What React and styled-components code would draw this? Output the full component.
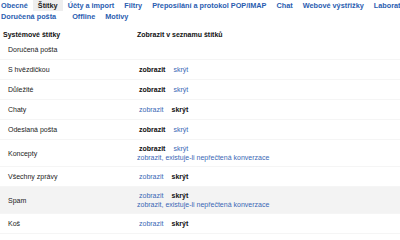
import styled, { createGlobalStyle } from "styled-components";

const GlobalStyle = createGlobalStyle`
	body {
		margin: 0;
		background: #fff;
		font-family: "Liberation Sans", Arial, sans-serif;
		overflow: hidden;
	}
`;

const Page = styled.div`
	width: 400px;
	height: 234px;
	overflow: hidden;
`;

const TabRow = styled.div`
	display: flex;
	margin-left: -4px;
	height: ${(p) => p.h}px;
	white-space: nowrap;
	align-items: center;
`;

const Tab = styled.span`
	padding: 0 5px;
	height: 11px;
	line-height: 11px;
	font-size: 7.3px;
	font-weight: bold;
	color: ${(p) => (p.active ? "#222" : "#2a5db0")};
	background: ${(p) => (p.active ? "#eeeeee" : "transparent")};
	margin-right: ${(p) => p.extra || 0}px;
`;

const Table = styled.div`
	margin-top: 1px;
	font-size: 7px;
	line-height: 9px;
	color: #222;
`;

const Row = styled.div`
	display: grid;
	grid-template-columns: 137px 1fr;
	align-items: center;
	min-height: 20px;
	box-sizing: border-box;
	padding: 4px 0;
	border-bottom: 1px solid #f5f5f5;
	background: ${(p) => (p.hover ? "#f3f3f3" : "transparent")};
`;

const HeadRow = styled(Row)`
	min-height: 0;
	padding: 8px 0 1px;
	border-bottom: none;
	font-weight: bold;
	color: #111;
`;

const Name = styled.div`
	padding-left: ${(p) => (p.head ? 3 : 8)}px;
`;

const Actions = styled.div`
	padding-left: ${(p) => (p.head ? 0 : 2)}px;
`;

const Choice = styled.span`
	margin-right: 8px;
	font-weight: ${(p) => (p.on ? "bold" : "normal")};
	color: ${(p) => (p.on ? "#111" : "#3a67b5")};
`;

const Extra = styled.div`
	margin-left: -2px;
	color: #3a67b5;
`;

const labels = [
	{ name: "S hvězdičkou", shown: true },
	{ name: "Důležité", shown: true },
	{ name: "Chaty", shown: false },
	{ name: "Odeslaná pošta", shown: true },
	{ name: "Koncepty", shown: true, extra: true },
	{ name: "Všechny zprávy", shown: false },
	{ name: "Spam", shown: false, extra: true, hover: true },
	{ name: "Koš", shown: false },
];

export default function App() {
	return (
		<Page>
			<GlobalStyle />
			<TabRow h={11}>
				<Tab>Obecné</Tab>
				<Tab active>Štítky</Tab>
				<Tab>Účty a import</Tab>
				<Tab>Filtry</Tab>
				<Tab>Přeposílání a protokol POP/IMAP</Tab>
				<Tab>Chat</Tab>
				<Tab>Webové výstřižky</Tab>
				<Tab>Laboratoř</Tab>
			</TabRow>
			<TabRow h={10}>
				<Tab extra={6}>Doručená pošta</Tab>
				<Tab>Offline</Tab>
				<Tab>Motivy</Tab>
			</TabRow>
			<Table>
				<HeadRow>
					<Name head>Systémové štítky</Name>
					<Actions head>Zobrazit v seznamu štítků</Actions>
				</HeadRow>
				<Row>
					<Name>Doručená pošta</Name>
					<Actions />
				</Row>
				{labels.map((l) => (
					<Row key={l.name} hover={l.hover}>
						<Name>{l.name}</Name>
						<Actions>
							<Choice on={l.shown}>zobrazit</Choice>
							<Choice on={!l.shown}>skrýt</Choice>
							{l.extra && <Extra>zobrazit, existuje-li nepřečtená konverzace</Extra>}
						</Actions>
					</Row>
				))}
			</Table>
		</Page>
	);
}
